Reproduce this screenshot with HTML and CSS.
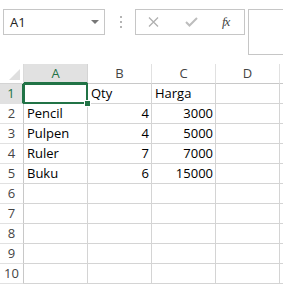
FILE: index.html
```html
<!DOCTYPE html>
<html>
<head>
<link rel="stylesheet" href="styles.css">
</head>
<body>

<div class="toolbar">
  <div class="name-box">
    <span class="name-text">A1</span>
    <span class="name-arrow"></span>
  </div>
  <div class="grip">
    <svg width="3" height="12" viewBox="0 0 3 12">
      <rect x="0" y="0" width="2" height="2" fill="#b4b4b4"/>
      <rect x="0" y="5" width="2" height="2" fill="#b4b4b4"/>
      <rect x="0" y="10" width="2" height="2" fill="#b4b4b4"/>
    </svg>
  </div>
  <div class="fx-box">
    <svg class="btn-cancel" width="11" height="10" viewBox="0 0 11 10">
      <path d="M1 0.5 L10 9.5 M10 0.5 L1 9.5" stroke="#b0b0b0" stroke-width="1.3" fill="none"/>
    </svg>
    <svg class="btn-enter" width="13" height="10" viewBox="0 0 13 10">
      <path d="M1 5 L4.5 8.5 L12 1" stroke="#bdbdbd" stroke-width="2" fill="none"/>
    </svg>
    <span class="btn-fx">fx</span>
  </div>
  <div class="formula-input"></div>
</div>

<div class="sheet">
  <div class="corner"><span class="corner-tri"></span></div>
  <div class="col-head selected">A</div>
  <div class="col-head">B</div>
  <div class="col-head">C</div>
  <div class="col-head">D</div>
  <div class="col-head last"></div>

  <div class="row-head selected">1</div>
  <div class="cell active"><span class="handle"></span></div>
  <div class="cell">Qty</div>
  <div class="cell">Harga</div>
  <div class="cell"></div>
  <div class="cell last"></div>

  <div class="row-head">2</div>
  <div class="cell">Pencil</div>
  <div class="cell num">4</div>
  <div class="cell num">3000</div>
  <div class="cell"></div>
  <div class="cell last"></div>

  <div class="row-head">3</div>
  <div class="cell">Pulpen</div>
  <div class="cell num">4</div>
  <div class="cell num">5000</div>
  <div class="cell"></div>
  <div class="cell last"></div>

  <div class="row-head">4</div>
  <div class="cell">Ruler</div>
  <div class="cell num">7</div>
  <div class="cell num">7000</div>
  <div class="cell"></div>
  <div class="cell last"></div>

  <div class="row-head">5</div>
  <div class="cell">Buku</div>
  <div class="cell num">6</div>
  <div class="cell num">15000</div>
  <div class="cell"></div>
  <div class="cell last"></div>

  <div class="row-head">6</div>
  <div class="cell"></div>
  <div class="cell"></div>
  <div class="cell"></div>
  <div class="cell"></div>
  <div class="cell last"></div>

  <div class="row-head">7</div>
  <div class="cell"></div>
  <div class="cell"></div>
  <div class="cell"></div>
  <div class="cell"></div>
  <div class="cell last"></div>

  <div class="row-head">8</div>
  <div class="cell"></div>
  <div class="cell"></div>
  <div class="cell"></div>
  <div class="cell"></div>
  <div class="cell last"></div>

  <div class="row-head">9</div>
  <div class="cell"></div>
  <div class="cell"></div>
  <div class="cell"></div>
  <div class="cell"></div>
  <div class="cell last"></div>

  <div class="row-head">10</div>
  <div class="cell"></div>
  <div class="cell"></div>
  <div class="cell"></div>
  <div class="cell"></div>
  <div class="cell last"></div>
</div>

</body>
</html>
```

FILE: styles.css
```css
body {
  background-color: white;
  margin: 0;
  overflow: hidden;
  font-family: "Open Sans", "Noto Sans", sans-serif;
}

.toolbar {
  display: flex;
  align-items: flex-start;
  padding: 9px 0 0 3px;
  height: 55px;
  box-sizing: border-box;
}

.name-box {
  width: 102px;
  height: 26px;
  border: 1px solid #c6c6c6;
  box-sizing: border-box;
  display: flex;
  align-items: center;
  justify-content: space-between;
  padding: 0 5px 0 6px;
}

.name-text {
  color: #222;
  font-size: 13px;
}

.name-arrow {
  width: 0;
  height: 0;
  border-left: 4px solid transparent;
  border-right: 4px solid transparent;
  border-top: 4px solid #777;
}

.grip {
  width: 15px;
  height: 26px;
  margin-left: 15px;
  display: flex;
  align-items: center;
}

.fx-box {
  width: 110px;
  height: 26px;
  border: 1px solid #c6c6c6;
  box-sizing: border-box;
  display: flex;
  align-items: center;
}

.btn-cancel {
  margin-left: 12px;
}

.btn-enter {
  margin-left: 26px;
}

.btn-fx {
  margin-left: 24px;
  font-family: "Liberation Serif", "DejaVu Serif", serif;
  font-style: italic;
  font-size: 13px;
  color: #444;
  letter-spacing: -1px;
}

.formula-input {
  flex: 1;
  height: 46px;
  margin-left: 3px;
  border: 1px solid #c6c6c6;
  border-right: none;
  box-sizing: border-box;
}

.sheet {
  display: grid;
  grid-template-columns: 24px 64px 64px 64px 64px 1fr;
  grid-auto-rows: 20px;
  margin-top: 9px;
}

.corner,
.col-head,
.row-head,
.cell {
  box-sizing: border-box;
  border-right: 1px solid #d4d4d4;
  border-bottom: 1px solid #d4d4d4;
}

.corner {
  position: relative;
  border-right-color: #dadada;
}

.corner-tri {
  position: absolute;
  right: 3px;
  bottom: 3px;
  width: 0;
  height: 0;
  border-left: 11px solid transparent;
  border-bottom: 11px solid #dfdfdf;
}

.col-head {
  color: #444;
  font-size: 13px;
  text-align: center;
  line-height: 19px;
  border-right-color: #e1e1e1;
  border-bottom-color: #c8c8c8;
}

.col-head.selected {
  background-color: #e1e1e1;
  color: #217346;
  border-bottom: 2px solid #217346;
  border-right-color: #d4d4d4;
  line-height: 18px;
}

.row-head {
  color: #444;
  font-size: 13px;
  text-align: center;
  line-height: 19px;
  border-right-color: #c8c8c8;
  border-bottom-color: #e1e1e1;
}

.row-head.selected {
  background-color: #e1e1e1;
  color: #217346;
  border-right: 2px solid #217346;
}

.cell {
  color: #000;
  font-size: 13px;
  line-height: 19px;
  padding: 0 3px;
  white-space: nowrap;
}

.cell.num {
  text-align: right;
  padding-right: 2px;
}

.cell.last {
  border-right: none;
}

.cell.active {
  position: relative;
}

.cell.active::after {
  content: "";
  position: absolute;
  left: -1px;
  top: -1px;
  right: -1px;
  bottom: -1px;
  border: 2px solid #217346;
}

.handle {
  position: absolute;
  right: -4px;
  bottom: -4px;
  width: 5px;
  height: 5px;
  background-color: #217346;
  border: 1px solid white;
  z-index: 2;
}
```
